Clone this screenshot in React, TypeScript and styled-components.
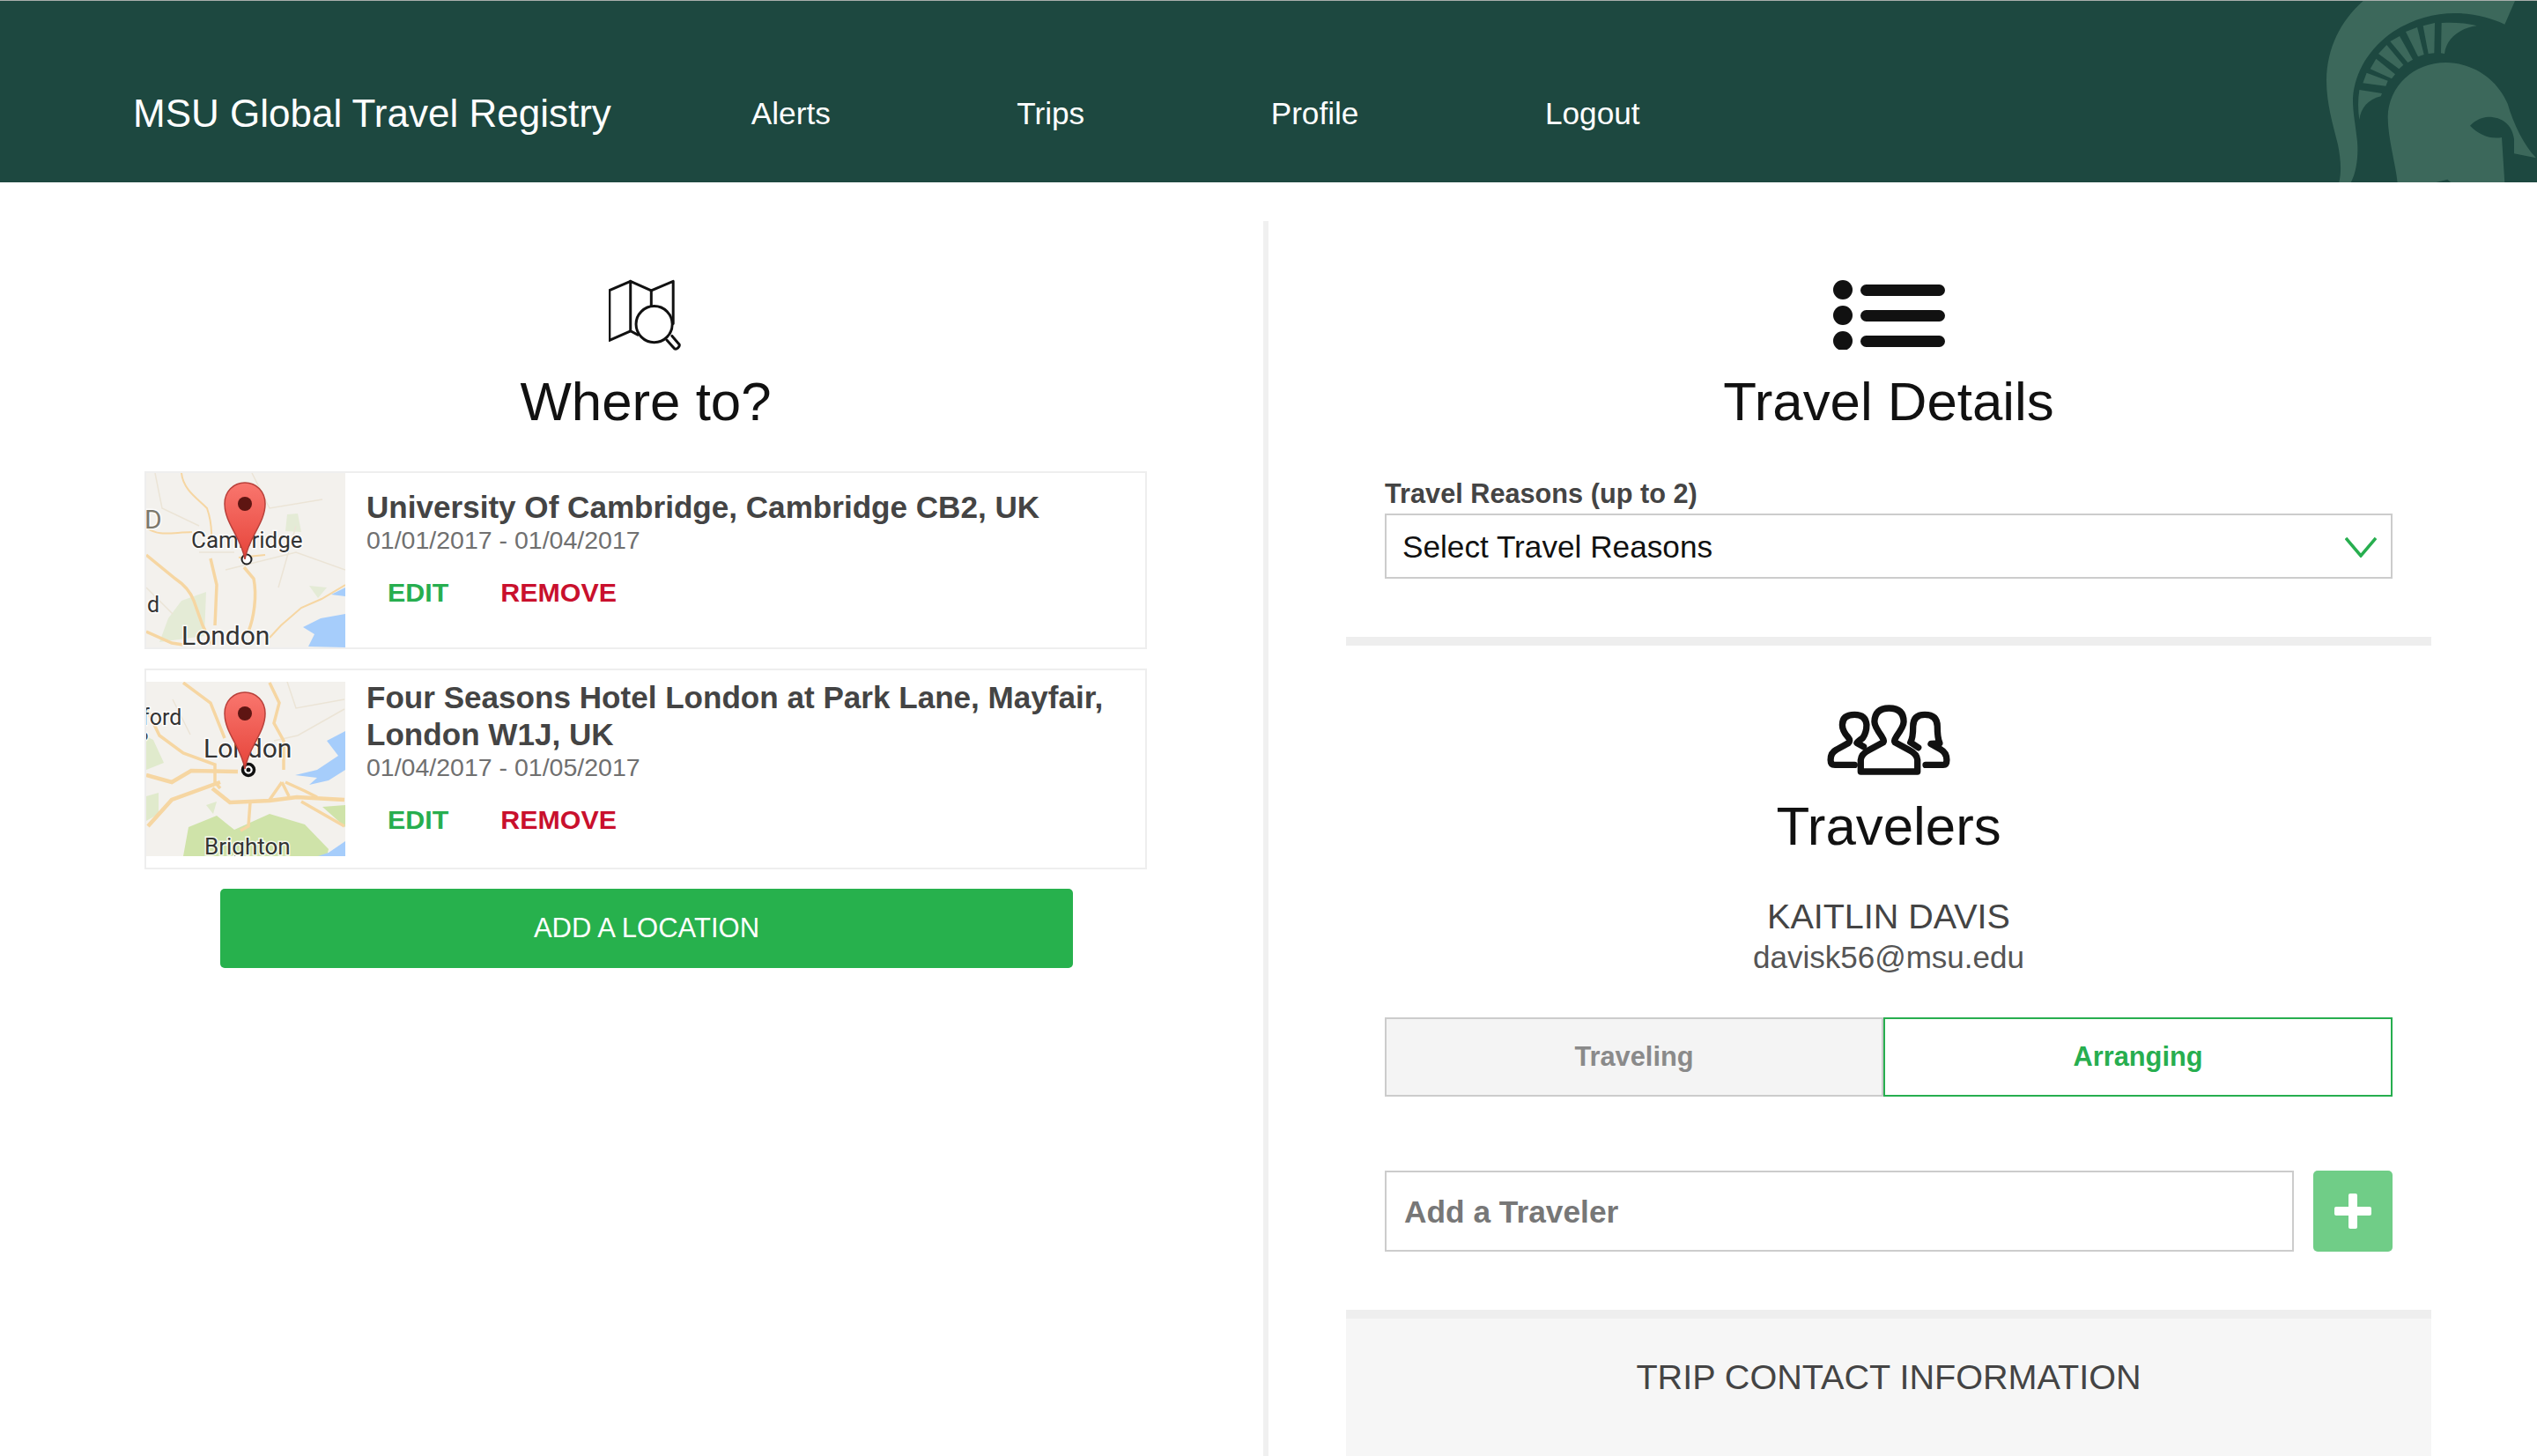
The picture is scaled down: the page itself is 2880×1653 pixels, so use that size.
import React from 'react';
import styled, { createGlobalStyle } from 'styled-components';

const GREEN = '#27ae4f';
const ROAD = '#f6d6a2';

const GlobalStyle = createGlobalStyle`
  html, body {
    margin: 0;
    padding: 0;
    background: #fff;
    font-family: "Liberation Sans", Arial, sans-serif;
  }
  * {
    box-sizing: border-box;
  }
`;

// Spartan helmet behind the header, traced in its own 1140x621 box
const SpartanLogo = () => (
  <Logo viewBox="0 0 1140 621">
    <path d="M548 0 C470 70 425 160 423 270 C423 350 445 420 462 490 C472 540 475 585 465 621 L505 621 C525 585 532 530 528 480 C522 420 512 380 513 330 C520 240 570 160 650 105 C720 60 790 42 860 42 C925 42 985 58 1030 80 L1065 0 Z" />
    <path d="M815 75 C860 72 900 76 935 85 C880 92 832 125 825 180 L813 178 Z" />
    <path d="M752 85 L792 75 L790 178 L770 180 Z" />
    <path d="M693 105 L732 90 L755 183 L735 190 Z" />
    <path d="M640 138 L672 120 L717 200 L700 210 Z" />
    <path d="M600 180 L628 150 L685 218 L670 232 Z" />
    <path d="M572 232 L592 197 L657 250 L645 265 Z" />
    <path d="M547 280 L560 245 L632 272 L625 290 Z" />
    <path d="M535 303 L612 315 L608 325 C565 335 540 365 535 405 C530 370 530 335 535 303 Z" />
    <path d="M665 621 C660 560 632 470 632 395 C635 290 720 210 830 210 C930 212 1005 270 1040 350 C1060 420 1095 490 1137 535 L1062 520 L1062 470 C1055 420 1020 395 975 395 C950 396 928 408 912 425 C940 455 980 472 1020 465 L1030 621 L850 621 L835 608 L785 621 Z" />
  </Logo>
);

const MapSearchIcon = () => (
  <svg width="85" height="83" viewBox="396 105 255 250" fill="none" stroke="#111" strokeWidth="9" strokeLinejoin="round" strokeLinecap="round">
    <path d="M470 285 L398 317 V146 L470 115 L541 147 L616 115 V260" />
    <path d="M470 115 V285 L495 298" />
    <path d="M541 147 V200" />
    <circle cx="551" cy="262" r="62" />
    <path d="M612 302 L636 330 Q640 336 632 343 Q625 350 619 344 L594 316" />
  </svg>
);

const ListIcon = () => (
  <svg width="128" height="80" viewBox="0 0 128 80" fill="#111">
    <circle cx="12" cy="12" r="11" />
    <circle cx="12" cy="41" r="11" />
    <circle cx="12" cy="70" r="11" />
    <rect x="32" y="6" width="96" height="13" rx="6.5" />
    <rect x="32" y="35" width="96" height="13" rx="6.5" />
    <rect x="32" y="64" width="96" height="13" rx="6.5" />
  </svg>
);

const PeopleIcon = () => (
  <svg width="143" height="83" viewBox="100 50 430 250" fill="none" stroke="#111" strokeWidth="22" strokeLinejoin="round" strokeLinecap="round">
    <path d="M218 285 L218 245 Q220 225 245 212 L295 185 Q300 180 290 165 Q265 130 265 115 Q265 68 315 68 Q365 68 365 115 Q365 130 340 165 Q330 180 335 185 L385 212 Q410 225 412 245 L412 285 Z" />
    <path d="M197 262 L130 262 Q115 262 115 245 Q115 220 135 210 L175 188 Q185 180 175 168 Q155 145 155 125 Q155 90 197 90 Q235 90 238 125 Q238 150 225 170 Q210 180 205 187 L228 200" />
    <path d="M440 262 L500 262 Q512 262 512 245 Q512 220 490 208 L458 190 L488 188 Q480 170 480 130 Q480 90 437 90 Q397 90 397 130 Q397 170 388 185 L415 203" />
  </svg>
);

const ChevronIcon = () => (
  <svg width="36" height="24" viewBox="0 0 36 24" fill="none" stroke={GREEN} strokeWidth="3.5">
    <path d="M1 2 L18 22 L35 2" />
  </svg>
);

const PlusIcon = () => (
  <svg width="42" height="40" viewBox="0 0 42 40" fill="#fff">
    <rect x="16" y="0" width="10" height="40" rx="2" />
    <rect x="0" y="15" width="42" height="10" rx="2" />
  </svg>
);

const MapPin = ({ id, y }: { id: string; y: number }) => (
  <g transform={`translate(112 ${y})`}>
    <linearGradient id={id} x1="0" y1="0" x2="0" y2="1">
      <stop offset="0" stopColor="#f9766e" />
      <stop offset="1" stopColor="#e6443a" />
    </linearGradient>
    <path d="M0 87 C-4 62 -23 46 -23 24 C-23 10 -13 0 0 0 C13 0 23 10 23 24 C23 46 4 62 0 87 Z" fill={`url(#${id})`} stroke="#b8403a" strokeWidth="1.5" />
    <circle cx="0" cy="24" r="8" fill="#5e1512" />
  </g>
);

const CambridgeMap = () => (
  <MapFrame viewBox="0 0 226 198">
    <rect width="226" height="198" fill="#f3f1ed" />
    <path d="M160 47 L172 46 L176 67 L158 66 Z M40 145 L68 135 L66 185 L15 192 L25 165 Z M185 128 L205 130 L195 142 Z" fill="#e4ebd6" />
    <path d="M226 160 L198 165 L178 175 L191 183 L184 197 L226 198 Z M210 138 L226 130 L226 140 Z" fill="#a6cdfb" />
    <path d="M10 0 L18 40 L60 60 M120 0 L140 40 L200 30 M90 110 L170 90 L226 110 M0 130 L30 160 M150 130 L170 60 M60 90 L100 90" fill="none" stroke="#ebe4d6" strokeWidth="1.5" />
    <g fill="none" stroke={ROAD} strokeWidth="3.5">
      <path d="M40 0 C42 20 60 30 69 40 C76 60 73 70 75 77" strokeWidth="2" />
      <path d="M0 62 C15 72 25 68 52 67" strokeWidth="2" />
      <path d="M73 97 L80 127 L78 173" />
      <path d="M111 107 L122 120 C126 140 122 165 116 180" />
      <path d="M0 93 L33 120 C45 128 51 137 54 145 L64 173 L75 195" />
      <path d="M0 180 L29 193 L42 195" />
      <path d="M226 127 L199 143 L176 153 L153 173 L140 187" strokeWidth="2" />
      <path d="M105 96 L135 93" strokeWidth="2" />
    </g>
    <Label x="-2" y="63" fontSize="30" fill="#7c786c">D</Label>
    <Label x="1" y="158" fontSize="25">d</Label>
    <Label x="51" y="85" fontSize="26">Cambridge</Label>
    <Label x="40" y="195" fontSize="30">London</Label>
    <circle cx="114" cy="98" r="5.5" fill="#fff" stroke="#222" strokeWidth="2" />
    <MapPin id="pin-cambridge" y={11} />
  </MapFrame>
);

const LondonMap = () => (
  <MapFrame viewBox="0 0 226 198">
    <rect width="226" height="198" fill="#f3f1ed" />
    <path d="M42 198 L48 165 L80 152 L100 168 L140 150 L180 162 L207 190 L205 198 Z M200 142 L226 140 L226 165 Z" fill="#cfe3a9" />
    <path d="M0 62 L8 66 L20 92 L0 100 Z M0 130 L14 126 L14 150 L0 158 Z M68 140 L80 136 L76 150 Z" fill="#e0eacc" />
    <path d="M226 56 L205 67 L218 84 L194 100 L169 106 L194 109 L185 117 L207 112 L226 100 Z M207 194 L226 181 L226 198 L195 198 Z" fill="#a6cdfb" />
    <path d="M160 0 L170 30 L225 20 M145 67 L172 61 L225 31 M30 20 L50 60" fill="none" stroke="#ebe4d6" strokeWidth="1.5" />
    <g fill="none" stroke={ROAD} strokeWidth="3.5">
      <path d="M42 1 L73 24 L89 64" />
      <path d="M140 1 L151 24 L145 47 L156 67 L156 100" />
      <path d="M0 30 L15 61 L42 81 L78 94 L78 114 L84 121" />
      <path d="M0 106 L29 114 L51 101 L104 102" strokeWidth="4.5" />
      <path d="M84 114 L29 134 L2 164" strokeWidth="4.5" />
      <path d="M75 121 L95 137 L140 135 L171 131 L225 134" strokeWidth="4.5" />
      <path d="M154 114 L140 134 M154 114 L162 130" />
      <path d="M158 114 L180 124 L194 131" />
      <path d="M176 136 L225 164" />
      <path d="M118 137 L116 164 L107 169" />
    </g>
    <Label x="-5" y="49" fontSize="25">ford</Label>
    <Label x="-8" y="67" fontSize="18">o</Label>
    <Label x="65" y="86" fontSize="30">London</Label>
    <Label x="66" y="196" fontSize="26">Brighton</Label>
    <circle cx="116" cy="100" r="6.5" fill="#fff" stroke="#111" strokeWidth="3.5" />
    <circle cx="116" cy="100" r="2.5" fill="#111" />
    <MapPin id="pin-london" y={12} />
  </MapFrame>
);

const LocationCard = ({ map, title, dates }: { map: React.ReactNode; title: string; dates: string }) => (
  <Card>
    {map}
    <CardBody>
      <CardTitle>{title}</CardTitle>
      <CardDates>{dates}</CardDates>
      <CardActions>
        <CardAction $color={GREEN}>EDIT</CardAction>
        <CardAction $color="#c9102d">REMOVE</CardAction>
      </CardActions>
    </CardBody>
  </Card>
);

export default function App() {
  return (
    <Page>
      <GlobalStyle />
      <Header>
        <Brand>MSU Global Travel Registry</Brand>
        <Nav>
          <NavLink>Alerts</NavLink>
          <NavLink>Trips</NavLink>
          <NavLink>Profile</NavLink>
          <NavLink>Logout</NavLink>
        </Nav>
        <SpartanLogo />
      </Header>
      <Main>
        <LeftColumn>
          <IconSlot>
            <MapSearchIcon />
          </IconSlot>
          <Heading>Where to?</Heading>
          <CardList>
            <LocationCard
              map={<CambridgeMap />}
              title="University Of Cambridge, Cambridge CB2, UK"
              dates="01/01/2017 - 01/04/2017"
            />
            <LocationCard
              map={<LondonMap />}
              title="Four Seasons Hotel London at Park Lane, Mayfair, London W1J, UK"
              dates="01/04/2017 - 01/05/2017"
            />
          </CardList>
          <AddLocation>ADD A LOCATION</AddLocation>
        </LeftColumn>
        <RightColumn>
          <Section>
            <IconSlot>
              <ListIcon />
            </IconSlot>
            <Heading>Travel Details</Heading>
            <FieldLabel>Travel Reasons (up to 2)</FieldLabel>
            <SelectBox>
              <span>Select Travel Reasons</span>
              <ChevronIcon />
            </SelectBox>
          </Section>
          <Section>
            <IconSlot>
              <PeopleIcon />
            </IconSlot>
            <Heading>Travelers</Heading>
            <TravelerName>KAITLIN DAVIS</TravelerName>
            <TravelerEmail>davisk56@msu.edu</TravelerEmail>
            <Toggle>
              <ToggleOption>Traveling</ToggleOption>
              <ToggleOption $active>Arranging</ToggleOption>
            </Toggle>
            <AddRow>
              <TravelerInput placeholder="Add a Traveler" />
              <AddButton>
                <PlusIcon />
              </AddButton>
            </AddRow>
          </Section>
          <ContactPanel>
            <ContactTitle>TRIP CONTACT INFORMATION</ContactTitle>
          </ContactPanel>
        </RightColumn>
      </Main>
    </Page>
  );
}

const Page = styled.div`
  height: 100vh;
  overflow: hidden;
  display: flex;
  flex-direction: column;
`;

const Header = styled.header`
  position: relative;
  flex: none;
  height: 207px;
  padding: 50px 0 0 151px;
  display: flex;
  align-items: center;
  background: #1d4840;
  border-top: 1px solid #a9aeac;
  color: #fff;
  overflow: hidden;
`;

const Brand = styled.div`
  font-size: 44px;
  margin-right: 159px;
`;

const Nav = styled.nav`
  display: flex;
  gap: 211.5px;
`;

const NavLink = styled.a`
  font-size: 35.2px;
`;

const Logo = styled.svg`
  position: absolute;
  top: 0;
  right: 0;
  width: 380px;
  height: 207px;
  fill: #3c685b;
`;

const Main = styled.main`
  flex: 1;
  display: flex;
  min-height: 0;
`;

const LeftColumn = styled.section`
  width: 1440px;
  flex: none;
  margin-top: 44px;
  padding: 66px 132px 0 164px;
  border-right: 6px solid #f0f0f0;
  display: flex;
  flex-direction: column;
`;

const RightColumn = styled.section`
  flex: 1;
  margin-top: 44px;
  padding: 66px 120px 0 88px;
  display: flex;
  flex-direction: column;
`;

const Section = styled.div`
  padding: 0 44px 66px;
  border-bottom: 10px solid #eee;
  display: flex;
  flex-direction: column;

  & + & {
    padding-top: 66px;
  }
`;

const IconSlot = styled.div`
  height: 80px;
  display: flex;
  align-items: center;
  justify-content: center;
`;

const Heading = styled.h2`
  margin: 22px 0 0;
  font-size: 61.8px;
  line-height: 73px;
  font-weight: 400;
  color: #111;
  text-align: center;
`;

const CardList = styled.div`
  margin-top: 43px;
  display: flex;
  flex-direction: column;
  gap: 22px;
`;

const Card = styled.article`
  display: flex;
  align-items: center;
  border: 2px solid #eee;
`;

const MapFrame = styled.svg`
  flex: none;
  width: 226px;
  height: 198px;
`;

const Label = styled.text`
  font-family: "Roboto", "Liberation Sans", sans-serif;
  fill: ${p => p.fill || '#333'};
  stroke: rgba(255, 255, 255, 0.8);
  stroke-width: 3px;
  paint-order: stroke;
`;

const CardBody = styled.div`
  flex: 1;
  padding: 10px 24px 37px;
`;

const CardTitle = styled.div`
  font-size: 35.1px;
  line-height: 42px;
  font-weight: 700;
  color: #444;
`;

const CardDates = styled.div`
  font-size: 28.5px;
  line-height: 33px;
  color: #707070;
`;

const CardActions = styled.div`
  margin-top: 24px;
  padding-left: 24px;
  display: flex;
  gap: 59px;
`;

const CardAction = styled.a<{ $color: string }>`
  font-size: 30.4px;
  line-height: 36px;
  font-weight: 700;
  color: ${p => p.$color};
`;

const AddLocation = styled.button`
  align-self: flex-start;
  width: 968px;
  height: 90px;
  margin: 22px 0 0 86px;
  border: 0;
  border-radius: 5px;
  background: #27b14d;
  color: #fff;
  font-family: inherit;
  font-size: 31px;
`;

const FieldLabel = styled.label`
  margin-top: 51px;
  font-size: 30.7px;
  line-height: 36px;
  font-weight: 700;
  color: #444;
`;

const SelectBox = styled.div`
  height: 74px;
  margin-top: 4px;
  padding: 2px 16px 0 18px;
  border: 2px solid #ccc;
  display: flex;
  align-items: center;
  justify-content: space-between;
  font-size: 35.2px;
  color: #111;
`;

const TravelerName = styled.div`
  margin-top: 43px;
  font-size: 39.5px;
  line-height: 47px;
  color: #444;
  text-align: center;
`;

const TravelerEmail = styled.div`
  margin-top: 2px;
  font-size: 35px;
  line-height: 42px;
  color: #555;
  text-align: center;
`;

const Toggle = styled.div`
  margin-top: 47px;
  height: 90px;
  display: grid;
  grid-template-columns: 566px 1fr;
`;

const ToggleOption = styled.div<{ $active?: boolean }>`
  display: flex;
  align-items: center;
  justify-content: center;
  font-size: 30.8px;
  font-weight: 700;
  border: 2px solid ${p => (p.$active ? GREEN : '#ccc')};
  background: ${p => (p.$active ? '#fff' : '#f4f4f4')};
  color: ${p => (p.$active ? GREEN : '#8a8a8a')};
`;

const AddRow = styled.div`
  margin-top: 84px;
  height: 92px;
  display: flex;
  gap: 22px;
`;

const TravelerInput = styled.input`
  flex: 1;
  min-width: 0;
  padding: 2px 20px 0;
  border: 2px solid #ccc;
  border-radius: 0;
  font-family: inherit;
  font-size: 35.3px;
  font-weight: 700;

  &::placeholder {
    color: #777;
    opacity: 1;
  }
`;

const AddButton = styled.button`
  width: 90px;
  border: 0;
  border-radius: 5px;
  background: #70cd87;
  display: flex;
  align-items: center;
  justify-content: center;
  padding: 0;
`;

const ContactPanel = styled.div`
  flex: 1;
  padding: 43px 44px 0;
  background: #f6f6f6;
`;

const ContactTitle = styled.h3`
  margin: 0;
  font-size: 39.6px;
  line-height: 47px;
  font-weight: 400;
  color: #444;
  text-align: center;
`;
